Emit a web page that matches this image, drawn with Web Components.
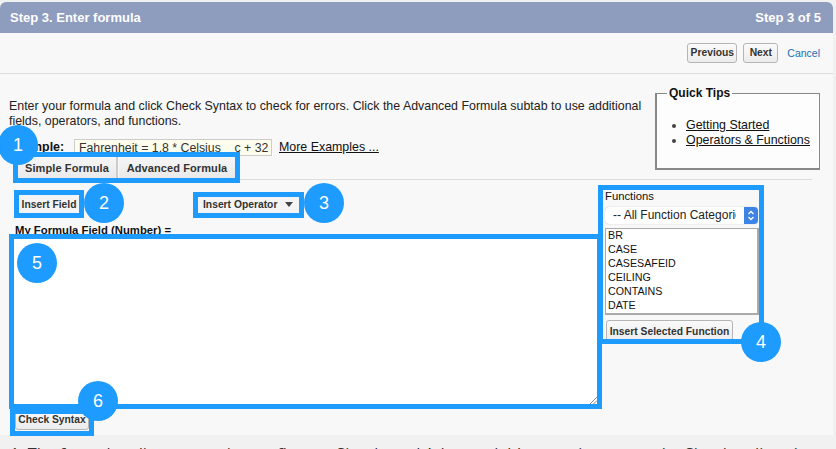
<!DOCTYPE html>
<html lang="en">
<head>
<meta charset="utf-8">
<title>Step 3. Enter formula</title>
<style>
  html, body { margin: 0; height: 449px; overflow: hidden; }
  body { position: relative; background: #f1f1f1; font-family: "Liberation Sans", Arial, sans-serif; font-size: 12px; color: #222; }
  #stage { padding-top: 2px; width: 833px; }
  #article { margin: 0; padding: 8px 0 0 10px; font-family: "Open Sans", sans-serif; font-size: 16.2px; line-height: 22px; color: #333; white-space: nowrap; }
</style>
</head>
<body>
<div id="stage">
  <wizard-panel heading="Step 3. Enter formula" step="Step 3 of 5">
    <formula-intro>
      Enter your formula and click Check Syntax to check for errors. Click the Advanced Formula subtab to use additional fields, operators, and functions.
    </formula-intro>
    <formula-editor></formula-editor>
  </wizard-panel>
  <p id="article">1. The formula editor comes in two flavors: Simple and Advanced. It's tempting to use the Simple editor, but</p>
</div>

<call-out x="13" y="152" w="227" h="31"></call-out>
<call-out x="14" y="190" w="70" h="28"></call-out>
<call-out x="193" y="192" w="111" h="26"></call-out>
<call-out x="598" y="185" w="166" h="159"></call-out>
<call-out x="9" y="234" w="593" h="175"></call-out>
<call-out x="10" y="409" w="84" h="27"></call-out>

<step-badge x="18" y="145">1</step-badge>
<step-badge x="104" y="203">2</step-badge>
<step-badge x="324" y="203">3</step-badge>
<step-badge x="761" y="342">4</step-badge>
<step-badge x="37" y="263">5</step-badge>
<step-badge x="98" y="401">6</step-badge>

<script>
// bouton gris du wizard
class WizButton extends HTMLElement {
  constructor() {
    super();
    this.attachShadow({ mode: 'open' });
    this.shadowRoot.innerHTML = `
      <style>
        :host { display: inline-flex; box-sizing: border-box; align-items: center; justify-content: center;
          height: var(--btn-h, 20px); padding: 0 var(--btn-pad, 3px); border: 1px solid #b5b5b5; border-radius: 3px;
          background: linear-gradient(#fafafa, #ececec); font: bold 10.3px "Liberation Sans", Arial, sans-serif; color: #333; white-space: nowrap; }
      </style>
      <slot></slot>`;
  }
}
customElements.define('wiz-button', WizButton);

class WizardPanel extends HTMLElement {
  constructor() {
    super();
    this.attachShadow({ mode: 'open' });
  }
  connectedCallback() {
    this.shadowRoot.innerHTML = `
      <style>
        :host { display: block; height: 433px; background: #f8f8f8; border-radius: 6px 6px 0 0; overflow: hidden; }
        header { display: flex; justify-content: space-between; align-items: center; height: 31px; padding: 0 12px 0 10px;
          background: #8e9cbe; color: #fff; font: bold 13px "Liberation Sans", Arial, sans-serif; }
        nav { display: flex; justify-content: flex-end; align-items: center; box-sizing: border-box; height: 41px;
          padding: 0 13px 1px 0; border-bottom: 1px solid #ddd; }
        wiz-button { margin-right: 6px; }
        a { margin-left: 3px; color: #1a6fb5; font: 10.5px "Liberation Sans", Arial, sans-serif; }
      </style>
      <header><span>${this.getAttribute('heading')}</span><span>${this.getAttribute('step')}</span></header>
      <nav>
        <wiz-button style="width:50px">Previous</wiz-button>
        <wiz-button style="width:35px">Next</wiz-button>
        <a>Cancel</a>
      </nav>
      <slot></slot>`;
  }
}
customElements.define('wizard-panel', WizardPanel);

class QuickTips extends HTMLElement {
  constructor() {
    super();
    this.attachShadow({ mode: 'open' });
    this.shadowRoot.innerHTML = `
      <style>
        :host { display: block; width: 165px; }
        fieldset { box-sizing: border-box; height: 84px; margin: 0; padding: 0 0 0 10px; border: 1px solid #888; border-width: 1px 1px 2px 2px; background: #fdfdfd; }
        legend { padding: 0 2px; font: bold 12px "Liberation Sans", Arial, sans-serif; color: #111; }
        ul { margin: 18px 0 0; padding: 0 0 0 19px; font-size: 12.4px; line-height: 15px; }
        li { color: #444; }
        a { color: #111; text-decoration: underline; }
      </style>
      <fieldset>
        <legend>Quick Tips</legend>
        <ul>
          <li><a>Getting Started</a></li>
          <li><a>Operators &amp; Functions</a></li>
        </ul>
      </fieldset>`;
  }
}
customElements.define('quick-tips', QuickTips);

class FormulaIntro extends HTMLElement {
  constructor() {
    super();
    this.attachShadow({ mode: 'open' });
    this.shadowRoot.innerHTML = `
      <style>
        :host { display: flex; justify-content: space-between; height: 83px; padding: 12px 13px 0 9px; box-sizing: border-box; font: 12.4px/15px "Liberation Sans", Arial, sans-serif; color: #222; }
        .left { width: 640px; }
        .text { margin: 13px 0 0; }
        .example { display: flex; align-items: center; margin-top: 10px; }
        b { width: 65px; color: #111; }
        .formula { box-sizing: border-box; width: 198px; height: 17px; padding-left: 4px; border: 1px solid #ccc; background: #fdfdee; line-height: 16px; white-space: pre; color: #333; font-size: 12.3px; }
        a { margin-left: 7px; color: #111; text-decoration: underline; }
      </style>
      <div class="left">
        <p class="text"><slot></slot></p>
        <div class="example"><b>Example:</b><span class="formula">Fahrenheit = 1.8 * Celsius    c + 32</span><a>More Examples ...</a></div>
      </div>
      <quick-tips></quick-tips>`;
  }
}
customElements.define('formula-intro', FormulaIntro);

class FunctionPicker extends HTMLElement {
  constructor() {
    super();
    this.attachShadow({ mode: 'open' });
    this.shadowRoot.innerHTML = `
      <style>
        :host { display: block; width: 155px; font: 11.3px "Liberation Sans", Arial, sans-serif; color: #111; }
        .label { height: 13px; line-height: 13px; }
        .select { display: flex; box-sizing: border-box; height: 17px; margin-top: 4px; border-radius: 4px; background: #fff; box-shadow: 0 0 1px #999; overflow: hidden; width: 153px; font-size: 12px; }
        .select span { flex: 1; margin: 0 8px; line-height: 16px; white-space: nowrap; overflow: hidden; color: #222; }
        .select svg { flex: none; width: 14px; height: 17px; background: #3d84e6; }
        ul { box-sizing: border-box; width: 154px; height: 87px; margin: 4px 0 0; padding: 0 0 0 2px; border: 1px solid #aaa; border-width: 1px 2px 2px 1px; background: #fff; list-style: none; font-size: 10.7px; line-height: 14px; overflow: hidden; }
        li:first-child { margin-top: -1px; }
        wiz-button { margin: 5px 0 0 1px; width: 127px; --btn-h: 22px; --btn-pad: 0; }
      </style>
      <div class="label">Functions</div>
      <div class="select"><span>-- All Function Categories --</span>
        <svg viewBox="0 0 14 17"><path d="M4.5 7 7 4.5 9.5 7M4.5 10 7 12.5 9.5 10" fill="none" stroke="#fff" stroke-width="1.3"/></svg>
      </div>
      <ul><li>BR</li><li>CASE</li><li>CASESAFEID</li><li>CEILING</li><li>CONTAINS</li><li>DATE</li></ul>
      <wiz-button>Insert Selected Function</wiz-button>`;
  }
}
customElements.define('function-picker', FunctionPicker);

class FormulaEditor extends HTMLElement {
  constructor() {
    super();
    this.attachShadow({ mode: 'open' });
    this.shadowRoot.innerHTML = `
      <style>
        :host { display: block; font: 11.3px "Liberation Sans", Arial, sans-serif; color: #111; }
        .tabs { display: flex; height: 22px; margin-left: 18px; }
        .tab { display: flex; align-items: center; justify-content: center; box-sizing: border-box; height: 22px; border-right: 2px solid #ccc; background: linear-gradient(#f6f6f6, #e9e9e9); font: bold 11px "Liberation Sans", Arial, sans-serif; color: #333; letter-spacing: .1px; }
        .tab.a { width: 100px; }
        .tab.b { width: 116px; border-right: 0; margin-left: 1px; }
        hr { height: 1px; margin: 0 21px 0 13px; border: 0; background: #ddd; }
        .grid { display: grid; grid-template-columns: 605px 155px; }
        .left { padding: 15px 0 0 14px; }
        .tools { display: flex; height: 18px; }
        .tools .op { margin-left: 119px; width: 101px; --btn-h: 18px; border: 0; background: #f4f4f4; justify-content: flex-start; padding-left: 5px; }
        .tools .fld { margin-left: 5px; width: 60px; border: 0; --btn-h: 18px; background: #f4f4f4; }
        .arrow { display: inline-block; margin-left: 8px; border: 4px solid transparent; border-top: 5px solid #444; border-bottom: 0; }
        .name { height: 13px; margin: 11px 0 0 1px; font-weight: bold; line-height: 13px; }
        .area { position: relative; box-sizing: border-box; width: 583px; height: 165px; margin-top: 2px; background: #fff; }
        .grip { position: absolute; right: 0; bottom: 0; }
        .check { margin: 5px 0 0 1px; width: 74px; --btn-h: 21px; --btn-pad: 0; }
        .right { padding-top: 10px; }
      </style>
      <div class="tabs"><div class="tab a">Simple Formula</div><div class="tab b">Advanced Formula</div></div>
      <hr>
      <div class="grid">
        <div class="left">
          <div class="tools"><wiz-button class="fld">Insert Field</wiz-button><wiz-button class="op">Insert Operator <span class="arrow"></span></wiz-button></div>
          <div class="name">My Formula Field (Number) =</div>
          <div class="area"><svg class="grip" width="7" height="7" viewBox="0 0 7 7"><path d="M0 7 7 0M3.5 7 7 3.5" stroke="#888" fill="none"/></svg></div>
          <wiz-button class="check">Check Syntax</wiz-button>
        </div>
        <div class="right"><function-picker></function-picker></div>
      </div>`;
  }
}
customElements.define('formula-editor', FormulaEditor);

// annotations posées par-dessus la capture
class CallOut extends HTMLElement {
  constructor() {
    super();
    this.attachShadow({ mode: 'open' });
    this.shadowRoot.innerHTML = `<style>:host { display: block; position: absolute; box-sizing: border-box; border: 5px solid #1e9bff; }</style>`;
  }
  connectedCallback() {
    this.style.left = this.getAttribute('x') + 'px';
    this.style.top = this.getAttribute('y') + 'px';
    this.style.width = this.getAttribute('w') + 'px';
    this.style.height = this.getAttribute('h') + 'px';
  }
}
customElements.define('call-out', CallOut);

class StepBadge extends HTMLElement {
  constructor() {
    super();
    this.attachShadow({ mode: 'open' });
    this.shadowRoot.innerHTML = `
      <style>
        :host { display: flex; position: absolute; width: 40px; height: 40px; margin: -20px 0 0 -20px; align-items: center; justify-content: center;
          border-radius: 50%; background: #1e9bff; color: #fff; font: 18px "Liberation Sans", Arial, sans-serif; }
      </style>
      <slot></slot>`;
  }
  connectedCallback() {
    this.style.left = this.getAttribute('x') + 'px';
    this.style.top = this.getAttribute('y') + 'px';
  }
}
customElements.define('step-badge', StepBadge);
</script>
</body>
</html>
